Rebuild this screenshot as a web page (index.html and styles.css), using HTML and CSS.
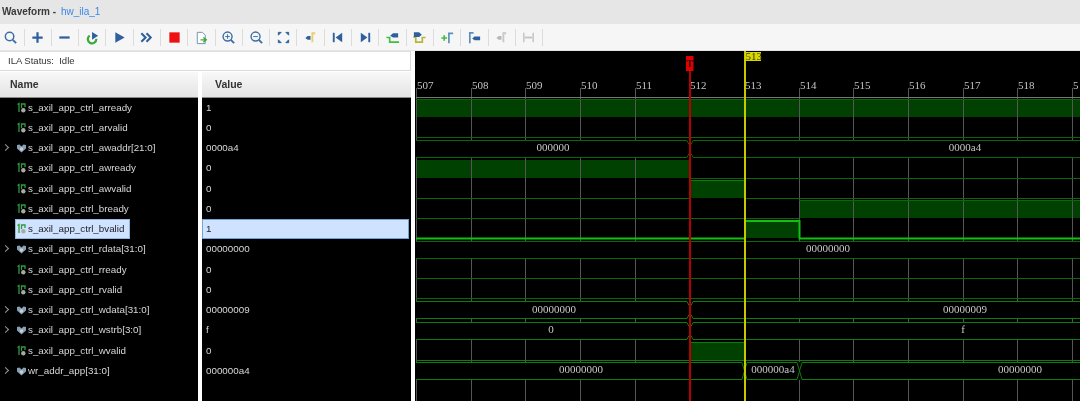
FILE: index.html
```html
<!DOCTYPE html>
<html lang="en">
<head>
<meta charset="utf-8">
<title>Waveform - hw_ila_1</title>
<link rel="stylesheet" href="styles.css">
</head>
<body>
<svg class="defs" width="0" height="0" aria-hidden="true">
  <symbol id="sig" viewBox="0 0 11 12">
    <path d="M1.500 2.500 3 1.500V10" fill="none" stroke="#2f9a3f" stroke-width="1.300"/>
    <path d="M5.500 6V2h3.500v3" fill="none" stroke="#2f9a3f" stroke-width="1.300"/>
    <circle cx="7.300" cy="8.300" r="2.200" fill="#a8a8a8"/>
  </symbol>
  <symbol id="bus" viewBox="0 0 11 12">
    <path d="M1 3 3.500 2.500l2 2 2-2L10 3v3.500L5.500 10.500 1 6.500z" fill="#86a0b6"/>
    <circle cx="5.500" cy="7" r="1.700" fill="#cfcfcf"/>
  </symbol>
</svg>
<div class="app">
  <header class="titlebar"><b>Waveform</b> <b>-</b> <span class="link">hw_ila_1</span></header>
  <nav class="toolbar">
    <span class="tool first"><svg viewBox="0 0 16 16"><circle cx="7" cy="7" r="4.500" fill="none" stroke="#3b6ea5" stroke-width="1.600"/><path d="m10.500 10.500 3.500 3.500" stroke="#3b6ea5" stroke-width="2"/></svg></span>
    <span class="tool"><svg viewBox="0 0 16 16"><path d="M8 2.500v11M2.500 8h11" stroke="#2f5f9f" stroke-width="2.400"/></svg></span>
    <span class="tool"><svg viewBox="0 0 16 16"><path d="M2.500 8h11" stroke="#2f5f9f" stroke-width="2.400"/></svg></span>
    <span class="tool"><svg viewBox="0 0 16 16"><path d="M5 6a4.500 4.500 0 1 0 7 3.500" fill="none" stroke="#3aa83a" stroke-width="2.400"/><path d="M7.500 2v8.500L14 6z" fill="#2f5f9f"/></svg></span>
    <span class="tool"><svg viewBox="0 0 16 16"><path d="M3.500 2.500v11l10-5.500z" fill="#2f5f9f"/></svg></span>
    <span class="tool"><svg viewBox="0 0 16 16"><path d="m2.500 3.500 4.500 4.500-4.500 4.500M8 3.500l4.500 4.500-4.500 4.500" fill="none" stroke="#2f5f9f" stroke-width="2.200"/></svg></span>
    <span class="tool"><svg viewBox="0 0 16 16"><rect x="2.500" y="2.500" width="11" height="11" fill="#ee1111"/></svg></span>
    <span class="tool"><svg viewBox="0 0 16 16"><path d="M3.500 2.500h5.500l3 3v9h-8.500z" fill="#fff" stroke="#6f8fb0"/><path d="M7 10.500h4.500M10 8l3 2.500-3 2.500" fill="none" stroke="#3aa83a" stroke-width="1.500"/></svg></span>
    <span class="tool"><svg viewBox="0 0 16 16"><circle cx="7" cy="7" r="4.800" fill="none" stroke="#3b6ea5" stroke-width="1.500"/><path d="m10.500 10.500 3.500 3.500" stroke="#3b6ea5" stroke-width="2"/><path d="M7 4.500v5M4.500 7h5" stroke="#3b6ea5"/></svg></span>
    <span class="tool"><svg viewBox="0 0 16 16"><circle cx="7" cy="7" r="4.800" fill="none" stroke="#3b6ea5" stroke-width="1.500"/><path d="m10.500 10.500 3.500 3.500" stroke="#3b6ea5" stroke-width="2"/><path d="M4.500 7h5" stroke="#3b6ea5"/></svg></span>
    <span class="tool"><svg viewBox="0 0 16 16"><path d="M2.500 2.500h3l-3 3zM13.500 2.500v3l-3-3zM2.500 13.500v-3l3 3zM13.500 13.500h-3l3-3z" fill="#2f5f9f" stroke="#2f5f9f"/></svg></span>
    <span class="tool"><svg viewBox="0 0 16 16"><path d="M10 13V3.500h3" fill="none" stroke="#e8cf70" stroke-width="2"/><path d="M2.500 8.500 5 6.500h3v4H5z" fill="#2f5f9f"/></svg></span>
    <span class="tool"><svg viewBox="0 0 16 16"><path d="M4 3v10" stroke="#2f5f9f" stroke-width="2"/><path d="M13 3v10L6 8z" fill="#2f5f9f"/></svg></span>
    <span class="tool"><svg viewBox="0 0 16 16"><path d="M12 3v10" stroke="#2f5f9f" stroke-width="2"/><path d="M3 3v10l7-5z" fill="#2f5f9f"/></svg></span>
    <span class="tool"><svg viewBox="0 0 16 16"><path d="M1.500 8H5v5h10" fill="none" stroke="#3fbf3f" stroke-width="1.800"/><path d="m5.500 6 3-2.500H14V8H8.500z" fill="#2f5f9f"/></svg></span>
    <span class="tool"><svg viewBox="0 0 16 16"><path d="M1.500 7.500H4V13h7V8h3.500" fill="none" stroke="#b5b73a" stroke-width="1.800"/><path d="M2 2.500h5.500L10.500 5 7.500 7.500H2z" fill="#2f5f9f"/></svg></span>
    <span class="tool"><svg viewBox="0 0 16 16"><path d="M1.500 8.500h6M4.500 5.500v6" stroke="#3fbf3f" stroke-width="1.800"/><path d="M9.500 14V3.500H14" fill="none" stroke="#5b8fc0" stroke-width="1.800"/></svg></span>
    <span class="tool"><svg viewBox="0 0 16 16"><path d="M3 14V3h4" fill="none" stroke="#5b8fc0" stroke-width="1.800"/><path d="M5.500 9 8 7h6v4H8z" fill="#2f5f9f"/></svg></span>
    <span class="tool"><svg viewBox="0 0 16 16"><path d="M10 13V3.500h3" fill="none" stroke="#c8c8c8" stroke-width="2"/><path d="M2.500 8.500 5 6.500h3v4H5z" fill="#b8b8b8"/></svg></span>
    <span class="tool"><svg viewBox="0 0 16 16"><path d="M3 3v10M13 3v10" stroke="#c4c4c4" stroke-width="1.600"/><path d="M4 8h8" stroke="#c4c4c4" stroke-width="2"/></svg></span>
  </nav>
  <main class="content">
    <section class="left">
      <div class="status">ILA Status:&nbsp; Idle</div>
      <div class="columns">
        <div class="col names">
          <div class="head">Name</div>
          <div class="row"><svg class="ic"><use href="#sig"/></svg>s_axil_app_ctrl_arready</div>
          <div class="row"><svg class="ic"><use href="#sig"/></svg>s_axil_app_ctrl_arvalid</div>
          <div class="row"><i class="chev"></i><svg class="ic"><use href="#bus"/></svg>s_axil_app_ctrl_awaddr[21:0]</div>
          <div class="row"><svg class="ic"><use href="#sig"/></svg>s_axil_app_ctrl_awready</div>
          <div class="row"><svg class="ic"><use href="#sig"/></svg>s_axil_app_ctrl_awvalid</div>
          <div class="row"><svg class="ic"><use href="#sig"/></svg>s_axil_app_ctrl_bready</div>
          <div class="row"><span class="sel"><svg class="ic"><use href="#sig"/></svg>s_axil_app_ctrl_bvalid</span></div>
          <div class="row"><i class="chev"></i><svg class="ic"><use href="#bus"/></svg>s_axil_app_ctrl_rdata[31:0]</div>
          <div class="row"><svg class="ic"><use href="#sig"/></svg>s_axil_app_ctrl_rready</div>
          <div class="row"><svg class="ic"><use href="#sig"/></svg>s_axil_app_ctrl_rvalid</div>
          <div class="row"><i class="chev"></i><svg class="ic"><use href="#bus"/></svg>s_axil_app_ctrl_wdata[31:0]</div>
          <div class="row"><i class="chev"></i><svg class="ic"><use href="#bus"/></svg>s_axil_app_ctrl_wstrb[3:0]</div>
          <div class="row"><svg class="ic"><use href="#sig"/></svg>s_axil_app_ctrl_wvalid</div>
          <div class="row"><i class="chev"></i><svg class="ic"><use href="#bus"/></svg>wr_addr_app[31:0]</div>
        </div>
        <div class="col values">
          <div class="head">Value</div>
          <div class="val">1</div>
          <div class="val">0</div>
          <div class="val">0000a4</div>
          <div class="val">0</div>
          <div class="val">0</div>
          <div class="val">0</div>
          <div class="val selv">1</div>
          <div class="val">00000000</div>
          <div class="val">0</div>
          <div class="val">0</div>
          <div class="val">00000009</div>
          <div class="val">f</div>
          <div class="val">0</div>
          <div class="val">000000a4</div>
        </div>
      </div>
    </section>
    <section class="wave">
      <svg class="plot" viewBox="415 51 665 350" width="665" height="350">
        <g class="fills">
          <rect x="416" y="99" width="664" height="18"/>
          <rect x="416" y="160" width="274" height="18"/>
          <rect x="690" y="180" width="54" height="18"/>
          <rect x="799" y="200" width="281" height="18"/>
          <rect x="744" y="220" width="55" height="18"/>
          <rect x="690" y="342" width="54" height="18"/>
        </g>
        <path class="grid" d="M416.500 88V401M471.500 88V401M525.500 88V401M580.500 88V401M635.500 88V401M689.500 88V401M744.500 88V401M799.500 88V401M853.500 88V401M908.500 88V401M963.500 88V401M1017.500 88V401M1072.500 88V401"/>
        <path class="axis" d="M416 97.500H1080"/>
        <g class="mask">
          <rect x="415" y="140" width="665" height="18"/>
          <rect x="415" y="241" width="665" height="18"/>
          <rect x="415" y="301" width="665" height="18"/>
          <rect x="415" y="322" width="665" height="18"/>
          <rect x="415" y="362" width="665" height="18"/>
        </g>
        <path class="edge dark" d="M416 99.500H1080"/>
        <path class="edge dark" d="M416 137.500H1080"/>
        <path class="edge dark" d="M416 140.500H687L689 144.500M691 144.500L693 140.500H1080M416 157.500H687L689 153.500M691 153.500L693 157.500H1080"/>
        <path class="edge dark" d="M690 178.500H1080M416 198.500H690M744 198.500H1080"/>
        <path class="edge" d="M690 180.500H744"/>
        <path class="edge dark" d="M416 218.500H799M799 200.500H1080"/>
        <path class="bright" d="M416 238.500H745V221H799.500V238.500H1080"/>
        <path class="edge dark" d="M416 241.500H1080M416 258.500H1080"/>
        <path class="edge dark" d="M416 278.500H1080M416 298.500H1080"/>
        <path class="edge" d="M416 301.500H687L689 305.500M691 305.500L693 301.500H1080M416 318.500H687L689 314.500M691 314.500L693 318.500H1080"/>
        <path class="edge" d="M416 322.500H687L689 326.500M691 326.500L693 322.500H1080M416 339.500H687L689 335.500M691 335.500L693 339.500H1080"/>
        <path class="edge" d="M416 360.500H1080M690 342.500H744"/>
        <path class="edge" d="M416 362.500H742L747 379.500H797L802 362.500H1080M416 379.500H742L747 362.500H797L802 379.500H1080"/>
        <g class="ticks">
          <text x="417" y="89">507</text><text x="472" y="89">508</text><text x="526" y="89">509</text><text x="581" y="89">510</text><text x="636" y="89">511</text><text x="690" y="89">512</text><text x="745" y="89">513</text><text x="800" y="89">514</text><text x="854" y="89">515</text><text x="909" y="89">516</text><text x="964" y="89">517</text><text x="1018" y="89">518</text><text x="1073" y="89">5</text>
        </g>
        <g class="bustext">
          <text x="553" y="151">000000</text><text x="965" y="151">0000a4</text>
          <text x="828" y="252">00000000</text>
          <text x="554" y="313">00000000</text><text x="965" y="313">00000009</text>
          <text x="551" y="333">0</text><text x="963" y="333">f</text>
          <text x="581" y="373">00000000</text><text x="773" y="373">000000a4</text><text x="1020" y="373">00000000</text>
        </g>
        <rect class="redline" x="689" y="71" width="2" height="330"/>
        <rect class="redflag" x="686" y="56" width="7.500" height="15"/>
        <text class="flagt" x="689.800" y="67">T</text>
        <rect class="yelline" x="744" y="51" width="2" height="350"/>
        <rect class="yelflag" x="745" y="52" width="16" height="9"/>
        <text class="yelt" x="745.500" y="60">513</text>
      </svg>
    </section>
  </main>
</div>
</body>
</html>
```
FILE: styles.css
```css
* { box-sizing: border-box; }
html, body { margin: 0; height: 100%; background: #fff; overflow: hidden; }
body { font-family: "Liberation Sans", Arial, sans-serif; font-size: 9.800px; }
.defs { position: absolute; }
.app { width: 1080px; height: 401px; display: flex; flex-direction: column; filter: blur(0.35px); }
.titlebar { height: 24px; background: #e6e6e6; padding: 1px 0 0 2px; font-size: 10px; line-height: 21px; color: #333; white-space: pre; }
.titlebar b { font-weight: bold; color: #3a3a3a; }
.link { color: #3b86e8; margin-left: 2px; }
.toolbar { height: 27px; background: #f6f6f6; display: flex; align-items: center; border-bottom: 1px solid #e4e4e4; }
.tool { width: 27.300px; height: 17px; display: flex; align-items: center; justify-content: center; border-right: 1px solid #dcdcdc; flex: none; }
.tool.first { width: 24.500px; padding-right: 3px; }
.tool svg { width: 15px; height: 15px; }
.content { flex: 1; display: flex; min-height: 0; background: #fff; }
.left { width: 415px; flex: none; display: flex; flex-direction: column; padding-right: 4px; }
.status { height: 20px; background: #fff; border-top: 1px solid #e0e0e0; border-bottom: 1px solid #dadada; border-right: 1px solid #dadada; padding-left: 8px; line-height: 18px; font-size: 9.500px; color: #333; }
.columns { flex: 1; display: flex; gap: 4px; padding-top: 1px; min-height: 0; }
.col { background: #000; overflow: hidden; }
.names { width: 198px; flex: none; }
.values { flex: 1; }
.head { height: 25.500px; background: linear-gradient(#f8f8f8, #e4e4e4); border-bottom: 1px solid #888; font-weight: bold; font-size: 10.500px; line-height: 24px; color: #333; }
.names .head { padding-left: 10px; }
.values .head { padding-left: 13px; }
.row, .val { height: 20.250px; line-height: 20px; color: #d8d8d8; white-space: nowrap; }
.row { display: flex; align-items: center; position: relative; padding-left: 16px; }
.val { padding-left: 4px; }
.ic { width: 11px; height: 12px; flex: none; margin-right: 1px; }
.chev { position: absolute; left: 3px; top: 7px; width: 5px; height: 5px; border-top: 1px solid #999; border-right: 1px solid #999; transform: rotate(45deg); }
.sel { display: flex; align-items: center; background: #cfe2ff; color: #222; border: 1px solid #8fb8de; height: 20px; width: 115px; margin-left: -1px; padding-left: 0; }
.selv { background: #cfe2ff; color: #222; border: 1px solid #6fa5d5; margin-right: 2px; line-height: 18px; padding-left: 3px; }
.wave { flex: 1; background: #000; min-width: 0; }
.plot { display: block; background: #000; }
.fills rect { fill: #004000; }
.grid { stroke: #565656; fill: none; }
.axis { stroke: #777; fill: none; }
.mask rect { fill: #000; }
.edge { fill: none; stroke: #0b7d0b; stroke-width: 1; }
.edge.dark { stroke: #086808; }
.bright { fill: none; stroke: #12c012; stroke-width: 2; }
.ticks text { font: 11px "Liberation Serif", serif; fill: #c4c4c4; }
.bustext text { font: 11px "Liberation Serif", serif; fill: #c8c8c8; text-anchor: middle; }
.redline { fill: #b80000; }
.redflag { fill: #e00000; }
.flagt { font: bold 10px "Liberation Serif", serif; fill: #300; text-anchor: middle; }
.yelline { fill: #c8c800; }
.yelflag { fill: #d8d800; }
.yelt { font: 11px "Liberation Serif", serif; fill: #3a3a00; }
```
